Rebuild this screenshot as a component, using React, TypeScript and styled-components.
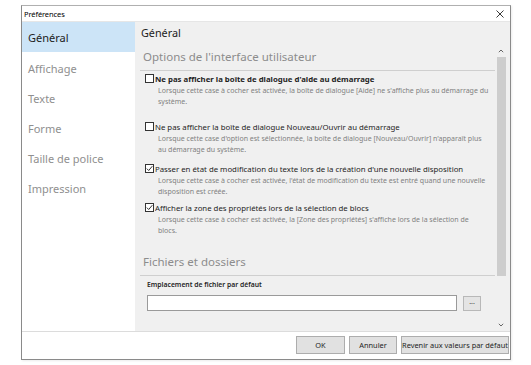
import React from "react";
import styled, { createGlobalStyle } from "styled-components";

const Global = createGlobalStyle`
  html, body { margin: 0; padding: 0; background: #ffffff; }
  body { font-family: "Noto Sans", "Open Sans", sans-serif; }
  * { box-sizing: border-box; }
`;

const Page = styled.div`
  width: 531px;
  height: 365px;
  padding: 5px 0 0 21px;
  background: #ffffff;
`;

const Window = styled.div`
  width: 490px;
  height: 355px;
  border: 1px solid #8a8a8a;
  border-top-color: #b0b0b0;
  background: #ffffff;
  display: flex;
  flex-direction: column;
  box-shadow: 1px 1px 2px rgba(0, 0, 0, 0.08);
`;

const TitleBar = styled.div`
  height: 16px;
  flex: none;
  display: flex;
  align-items: center;
  justify-content: space-between;
  padding: 0 6px 0 2px;
  border-bottom: 1px solid #e6e6e6;
`;

const Title = styled.span`
  font-size: 7.5px;
  color: #000;
  letter-spacing: -0.1px;
`;

const Body = styled.div`
  flex: 1;
  display: flex;
  min-height: 0;
`;

const Sidebar = styled.nav`
  width: 113px;
  display: flex;
  flex-direction: column;
  background: #ffffff;
`;

const NavItem = styled.div<{ $active?: boolean }>`
  height: 30px;
  flex: none;
  display: flex;
  align-items: center;
  padding-left: 6px;
  font-size: 11px;
  color: ${(p) => (p.$active ? "#222" : "#8f8f8f")};
  background: ${(p) => (p.$active ? "#cce4f7" : "transparent")};
  margin-bottom: ${(p) => (p.$active ? "1px" : "0")};
`;

const Content = styled.section`
  flex: 1;
  background: #f0f0f0;
  display: flex;
  flex-direction: column;
  min-width: 0;
  overflow: hidden;
`;

const Heading = styled.h1`
  margin: 0;
  height: 23px;
  flex: none;
  padding: 3px 0 0 6px;
  font-size: 10.8px;
  font-weight: 400;
  color: #222;
`;

const ScrollArea = styled.div`
  flex: 1;
  display: flex;
  padding-right: 4px;
  min-height: 0;
`;

const ScrollContent = styled.div`
  flex: 1;
  padding: 2px 1px 0 5px;
  display: flex;
  flex-direction: column;
  overflow: hidden;
`;

const SectionTitle = styled.h2<{ $top?: number }>`
  margin: ${(p) => p.$top ?? 0}px 0 0;
  padding: 1px 0 5px 3px;
  font-size: 11.5px;
  line-height: 17px;
  font-weight: 400;
  color: #8c8c8c;
  border-bottom: 1px solid #cfcfcf;
  white-space: nowrap;
`;

const Item = styled.div<{ $space: number }>`
  display: flex;
  flex-direction: column;
  padding-left: 5px;
  margin-bottom: ${(p) => p.$space}px;
`;

const CheckRow = styled.label<{ $strong?: boolean }>`
  display: flex;
  align-items: center;
  gap: 1px;
  height: 11px;
  font-size: 7.8px;
  font-weight: ${(p) => (p.$strong ? 700 : 400)};
  color: #1e1e1e;
  white-space: nowrap;
`;

const Box = styled.span`
  width: 9px;
  height: 9px;
  border: 1px solid #333;
  background: #fff;
  display: inline-flex;
  align-items: center;
  justify-content: center;
  flex: none;
`;

const Desc = styled.p`
  margin: 1px 0 0 13px;
  font-size: 7px;
  line-height: 11px;
  color: #808080;
  white-space: nowrap;
`;

const FieldLabel = styled.div`
  padding: 4px 0 0 7px;
  font-size: 6.8px;
  font-weight: 600;
  color: #1e1e1e;
  height: 19px;
`;

const FieldRow = styled.div`
  display: flex;
  align-items: center;
  gap: 6px;
  padding-left: 7px;
`;

const TextInput = styled.div`
  width: 310px;
  height: 16px;
  background: #fff;
  border: 1px solid #9a9a9a;
`;

const SmallButton = styled.button`
  width: 18px;
  height: 15px;
  border: 1px solid #b8b8b8;
  background: #e4e4e4;
  font-size: 7px;
  color: #444;
  padding: 0 0 3px;
  font-family: inherit;
  line-height: 1;
`;

const Scrollbar = styled.div`
  width: 10px;
  flex: none;
  display: flex;
  flex-direction: column;
  align-items: center;
`;

const Arrow = styled.div`
  height: 12px;
  width: 10px;
  display: flex;
  align-items: center;
  justify-content: center;
`;

const Thumb = styled.div`
  width: 9px;
  height: 219px;
  background: #cdcdcd;
`;

const Spacer = styled.div`
  flex: 1;
`;

const Footer = styled.footer`
  height: 28px;
  flex: none;
  border-top: 1px solid #dcdcdc;
  display: flex;
  justify-content: flex-end;
  align-items: flex-start;
  gap: 4px;
  padding: 4px 1px 0 0;
  background: #fff;
`;

const Button = styled.button<{ $w: number }>`
  width: ${(p) => p.$w}px;
  height: 18px;
  border: 1px solid #adadad;
  background: #e1e1e1;
  font-family: inherit;
  font-size: 7.4px;
  color: #1e1e1e;
  padding: 0;
`;

const Check = () => (
  <svg width="7" height="7" viewBox="0 0 7 7">
    <path d="M0.8 3.6 L2.7 5.5 L6.3 1.2" fill="none" stroke="#333" strokeWidth="1" />
  </svg>
);

const Chevron = ({ up }: { up?: boolean }) => (
  <svg width="6" height="4" viewBox="0 0 6 4">
    <path
      d={up ? "M0.8 3.2 L3 1 L5.2 3.2" : "M0.8 0.8 L3 3 L5.2 0.8"}
      fill="none"
      stroke="#666"
      strokeWidth="1"
    />
  </svg>
);

const Close = () => (
  <svg width="8" height="8" viewBox="0 0 8 8">
    <path d="M0.5 0.5 L7.5 7.5 M7.5 0.5 L0.5 7.5" stroke="#222" strokeWidth="0.9" />
  </svg>
);

const nav = ["Général", "Affichage", "Texte", "Forme", "Taille de police", "Impression"];

const items = [
  {
    label: "Ne pas afficher la boîte de dialogue d'aide au démarrage",
    desc: ["Lorsque cette case à cocher est activée, la boîte de dialogue [Aide] ne s'affiche plus au démarrage du", "système."],
    checked: false,
    strong: true,
    space: 14,
  },
  {
    label: "Ne pas afficher la boîte de dialogue Nouveau/Ouvrir au démarrage",
    desc: ["Lorsque cette case d'option est sélectionnée, la boîte de dialogue [Nouveau/Ouvrir] n'apparaît plus", "au démarrage du système."],
    checked: false,
    space: 8,
  },
  {
    label: "Passer en état de modification du texte lors de la création d'une nouvelle disposition",
    desc: ["Lorsque cette case à cocher est activée, l'état de modification du texte est entré quand une nouvelle", "disposition est créée."],
    checked: true,
    space: 5,
  },
  {
    label: "Afficher la zone des propriétés lors de la sélection de blocs",
    desc: ["Lorsque cette case à cocher est activée, la [Zone des propriétés] s'affiche lors de la sélection de", "blocs."],
    checked: true,
    space: 0,
  },
];

export default function App() {
  return (
    <>
      <Global />
      <Page>
        <Window>
          <TitleBar>
            <Title>Préférences</Title>
            <Close />
          </TitleBar>
          <Body>
            <Sidebar>
              {nav.map((n, i) => (
                <NavItem key={n} $active={i === 0}>
                  {n}
                </NavItem>
              ))}
            </Sidebar>
            <Content>
              <Heading>Général</Heading>
              <ScrollArea>
                <ScrollContent>
                  <SectionTitle>Options de l'interface utilisateur</SectionTitle>
                  <div style={{ height: 2 }} />
                  {items.map((it) => (
                    <Item key={it.label} $space={it.space}>
                      <CheckRow $strong={it.strong}>
                        <Box>{it.checked && <Check />}</Box>
                        {it.label}
                      </CheckRow>
                      <Desc>
                        {it.desc[0]}
                        <br />
                        {it.desc[1]}
                      </Desc>
                    </Item>
                  ))}
                  <SectionTitle $top={16}>Fichiers et dossiers</SectionTitle>
                  <FieldLabel>Emplacement de fichier par défaut</FieldLabel>
                  <FieldRow>
                    <TextInput />
                    <SmallButton>...</SmallButton>
                  </FieldRow>
                </ScrollContent>
                <Scrollbar>
                  <Arrow>
                    <Chevron up />
                  </Arrow>
                  <Thumb />
                  <Spacer />
                  <Arrow>
                    <Chevron />
                  </Arrow>
                </Scrollbar>
              </ScrollArea>
            </Content>
          </Body>
          <Footer>
            <Button $w={49}>OK</Button>
            <Button $w={48}>Annuler</Button>
            <Button $w={108}>Revenir aux valeurs par défaut</Button>
          </Footer>
        </Window>
      </Page>
    </>
  );
}
